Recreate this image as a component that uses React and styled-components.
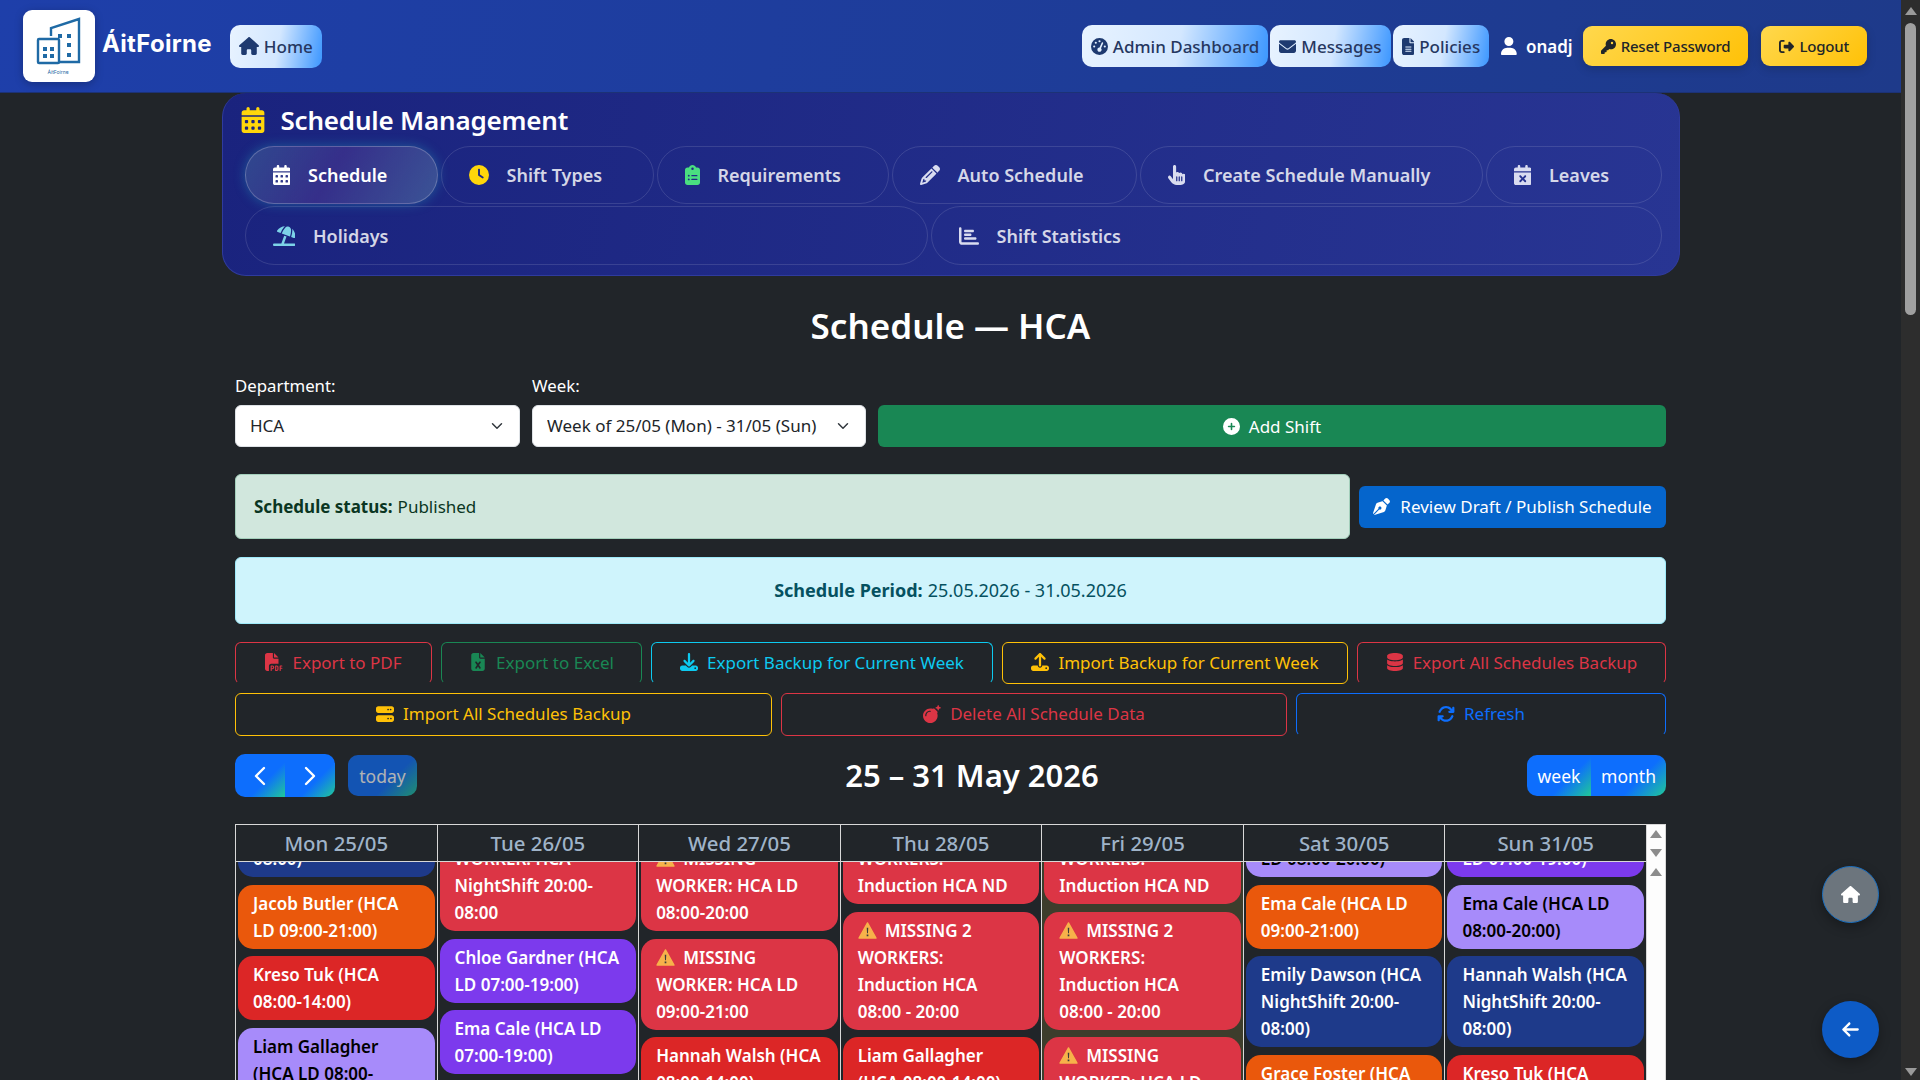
import React from "react";
import styled, { createGlobalStyle, css } from "styled-components";
import {
  FaHouse,
  FaGaugeHigh,
  FaEnvelope,
  FaFileLines,
  FaUser,
  FaKey,
  FaRightFromBracket,
  FaCalendarDays,
  FaClock,
  FaClipboardList,
  FaPencil,
  FaHandPointer,
  FaCalendarXmark,
  FaUmbrellaBeach,
  FaChartBar,
  FaFilePdf,
  FaFileExcel,
  FaDownload,
  FaUpload,
  FaDatabase,
  FaServer,
  FaBomb,
  FaArrowsRotate,
  FaPenNib,
  FaCirclePlus,
  FaArrowLeft,
} from "react-icons/fa6";
import { ChevronLeft, ChevronRight } from "lucide-react";

const GlobalStyle = createGlobalStyle`
  html, body {
    margin: 0;
    height: 100%;
    overflow: hidden;
    background: #212529;
  }
  * { box-sizing: border-box; }
  body {
    font-family: "Noto Sans", "Open Sans", sans-serif;
    color: #fff;
  }
`;

const Shell = styled.div`
  display: flex;
  height: 100vh;
  overflow: hidden;
`;

const Page = styled.div`
  flex: 1;
  min-width: 0;
  background: #212529;
`;

/* window scrollbar */
const Rail = styled.aside`
  width: 19px;
  flex: none;
  background: #2d2d2d;
  display: flex;
  flex-direction: column;
  align-items: center;
  padding: 7px 0 4px;
`;

const RailArrow = styled.span`
  width: 0;
  height: 0;
  border-left: 6px solid transparent;
  border-right: 6px solid transparent;
  ${(p) =>
    p.$down
      ? css`
          border-top: 8px solid #9a9a9a;
          margin-top: auto;
        `
      : css`
          border-bottom: 8px solid #9a9a9a;
        `}
`;

const RailThumb = styled.span`
  width: 11px;
  height: 292px;
  margin-top: 8px;
  border-radius: 6px;
  background: #a0a0a0;
`;

/* top bar */
const TopBar = styled.header`
  height: 93px;
  display: flex;
  align-items: center;
  padding: 0 34px 0 23px;
  background: linear-gradient(100deg, #1e3faa 0%, #1e3a8a 100%);
  border-bottom: 1px solid #1c3276;
`;

const LogoBox = styled.div`
  width: 72px;
  height: 72px;
  border-radius: 9px;
  background: #fff;
  box-shadow: 0 2px 8px rgba(0, 0, 0, 0.25);
  flex: none;
`;

const BrandName = styled.span`
  font-family: Inter, "Noto Sans", sans-serif;
  font-size: 24px;
  font-weight: 700;
  letter-spacing: 0.3px;
  margin: -6px 18px 0 7px;
`;

const NavLinks = styled.nav`
  margin-left: auto;
  display: flex;
  align-items: center;
  gap: 2px;
`;

const NavButton = styled.a`
  height: 42px;
  display: inline-flex;
  align-items: center;
  gap: 5px;
  padding: 0 9px;
  border-radius: 10px;
  font-size: 17px;
  font-weight: 500;
  color: #26375f;
  background: linear-gradient(100deg, #e8f3ff 0%, #d3e7ff 52%, #3b96ff 100%);
  svg {
    font-size: 17px;
    width: ${(p) => p.$iconWidth || 17}px;
    color: #1e3a70;
    flex: none;
  }
`;

const HomeButton = styled(NavButton)`
  height: 43px;
  svg {
    font-size: 18px;
  }
`;

const UserTag = styled.span`
  display: inline-flex;
  align-items: center;
  gap: 9px;
  margin: 0 8px 0 10px;
  font-size: 17px;
  font-weight: 600;
  svg {
    font-size: 18px;
    width: 15.75px;
  }
`;

const GoldButton = styled.a`
  height: 40px;
  display: inline-flex;
  align-items: center;
  gap: 5px;
  padding: 0 18px;
  margin-left: ${(p) => p.$gap || 0}px;
  border-radius: 9px;
  font-size: 15px;
  font-weight: 500;
  letter-spacing: -0.2px;
  color: #212529;
  background: linear-gradient(135deg, #ffd84d 0%, #ffc107 100%);
  box-shadow: 0 3px 10px rgba(0, 0, 0, 0.18);
  svg {
    font-size: 15px;
  }
`;

/* schedule panel */
const Panel = styled.section`
  width: 1458px;
  margin: 0 auto;
  height: 183px;
  border-radius: 24px;
  background: linear-gradient(100deg, #1a237e 0%, #283593 100%);
  border: 1px solid #2f3b9e;
  border-top: 0;
`;

const PanelTitle = styled.h1`
  margin: 0;
  height: 53px;
  padding: 1px 0 0 17px;
  display: flex;
  align-items: center;
  gap: 15px;
  font-size: 26px;
  font-weight: 600;
  letter-spacing: -0.2px;
  color: #fff;
  svg {
    color: #ffd60a;
    font-size: 26px;
  }
`;

const TabRow = styled.div`
  display: flex;
  gap: 3px;
  padding: 0 17px 0 22px;
  margin-bottom: 2px;
`;

const Tab = styled.a`
  flex: 0 0 ${(p) => p.$width}px;
  height: ${(p) => (p.$tall ? 59 : 58)}px;
  display: flex;
  align-items: center;
  gap: 18px;
  padding: 0 27px;
  border-radius: 32px;
  border: 1px solid rgba(255, 255, 255, 0.12);
  font-size: 18px;
  font-weight: 600;
  color: rgba(255, 255, 255, 0.82);
  svg {
    font-size: 20px;
    width: ${(p) => p.$iconWidth || 20}px;
    flex: none;
    color: ${(p) => p.$tint || "#d9dcf0"};
  }
  ${(p) =>
    p.$active &&
    css`
      color: #fff;
      border-color: rgba(255, 255, 255, 0.22);
      background: linear-gradient(120deg, rgba(70, 110, 160, 0.5), rgba(110, 70, 160, 0.32) 45%, rgba(90, 130, 170, 0.5));
      box-shadow: 0 0 12px rgba(40, 190, 200, 0.35);
    `}
`;

/* content */
const Content = styled.main`
  width: 1431px;
  margin: 0 auto;
`;

const Heading = styled.h2`
  margin: 28px 0 0;
  height: 44px;
  line-height: 44px;
  text-align: center;
  font-size: 35px;
  font-weight: 600;
`;

const FilterRow = styled.div`
  margin-top: 26px;
  display: flex;
  align-items: flex-end;
  gap: 12px;
`;

const Field = styled.label`
  width: ${(p) => p.$width}px;
  flex: none;
  display: flex;
  flex-direction: column;
  gap: 7px;
  font-size: 16.8px;
  line-height: 24px;
`;

const Select = styled.select`
  appearance: none;
  height: 42px;
  padding: 0 14px;
  border: 1px solid #dee2e6;
  border-radius: 6px;
  font: inherit;
  font-size: 17px;
  color: #212529;
  background: #fff url("data:image/svg+xml,%3csvg xmlns='http://www.w3.org/2000/svg' viewBox='0 0 16 16'%3e%3cpath fill='none' stroke='%23343a40' stroke-linecap='round' stroke-linejoin='round' stroke-width='2' d='m2 5 6 6 6-6'/%3e%3c/svg%3e") no-repeat right 14px center / 16px 12px;
`;

const AddButton = styled.button`
  flex: 1;
  height: 42px;
  display: flex;
  align-items: center;
  justify-content: center;
  gap: 9px;
  border: 0;
  border-radius: 6px;
  font: inherit;
  font-size: 17px;
  color: #fff;
  background: #198754;
`;

const StatusRow = styled.div`
  margin-top: 27px;
  display: flex;
  align-items: center;
  gap: 9px;
`;

const Alert = styled.div`
  flex: 1;
  display: flex;
  align-items: center;
  justify-content: ${(p) => (p.$center ? "center" : "flex-start")};
  gap: 5px;
  height: ${(p) => p.$height}px;
  padding: 0 18px 1px;
  border-radius: 6px;
  font-size: ${(p) => p.$size || 17}px;
  background: ${(p) => p.$bg};
  color: ${(p) => p.$fg};
  border: 1px solid ${(p) => p.$line};
  margin-top: ${(p) => p.$top || 0}px;
  b {
    font-weight: 700;
  }
`;

const PublishButton = styled.button`
  width: 307px;
  flex: none;
  height: 42px;
  display: flex;
  align-items: center;
  justify-content: center;
  gap: 10px;
  border: 0;
  border-radius: 6px;
  font: inherit;
  font-size: 17px;
  color: #fff;
  background: #0565cc;
`;

const ActionRow = styled.div`
  display: flex;
  gap: 9px;
  margin-top: ${(p) => p.$top}px;
`;

const OutlineButton = styled.button`
  flex: 0 0 ${(p) => p.$width}px;
  height: ${(p) => p.$height || 42}px;
  display: flex;
  align-items: center;
  justify-content: center;
  gap: 9px;
  padding: 0 0 2px;
  background: transparent;
  border: 1px solid ${(p) => p.$color};
  ${(p) => p.$open && "border-bottom-color: transparent;"}
  border-radius: 6px;
  font: inherit;
  font-size: 17px;
  color: ${(p) => p.$color};
  svg {
    font-size: 18px;
    flex: none;
  }
`;

const CalToolbar = styled.div`
  margin-top: 18px;
  height: 43px;
  display: flex;
  align-items: center;
`;

const gradientBtn = css`
  background: linear-gradient(135deg, #0d6efd 0%, #0d6efd 62%, #20c997 100%);
  color: #fff;
  border: 0;
  font: inherit;
  font-size: 17.5px;
`;

const NavGroup = styled.div`
  display: flex;
  height: 43px;
  border-radius: 10px;
  overflow: hidden;
`;

const PagerButton = styled.button`
  ${gradientBtn}
  width: 50px;
  padding: 0;
  display: flex;
  align-items: center;
  justify-content: center;
`;

const TodayButton = styled.button`
  ${gradientBtn}
  width: 69px;
  height: 41px;
  margin-left: 13px;
  border-radius: 10px;
  opacity: 0.65;
`;

const RangeTitle = styled.h3`
  flex: 1;
  margin: -2px 0 0;
  text-align: center;
  font-size: 31px;
  font-weight: 600;
`;

const ViewGroup = styled.div`
  display: flex;
  height: 41px;
  border-radius: 10px;
  overflow: hidden;
`;

const ViewButton = styled.button`
  ${gradientBtn}
  width: ${(p) => p.$width}px;
  padding: 0;
`;

/* calendar */
const Calendar = styled.div`
  margin-top: 27px;
  display: flex;
  height: 420px;
  border-top: 1px solid #d8d8d8;
`;

const CalMain = styled.div`
  flex: 1;
  min-width: 0;
  display: flex;
  flex-direction: column;
`;

const DayHead = styled.div`
  height: 37px;
  flex: none;
  display: grid;
  grid-template-columns: repeat(7, 1fr);
  border-bottom: 1px solid #d8d8d8;
  background: #212529;
  position: relative;
  z-index: 1;
`;

const DayName = styled.div`
  display: flex;
  align-items: center;
  justify-content: center;
  border-left: 1px solid #d8d8d8;
  font-size: 20.4px;
  font-weight: 500;
  color: #9fb3c8;
`;

const DayBody = styled.div`
  flex: 1;
  min-height: 0;
  display: grid;
  grid-template-columns: repeat(7, 1fr);
  overflow: hidden;
`;

const DayColumn = styled.div`
  border-left: 1px solid #d8d8d8;
  padding: 0 2px;
  overflow: hidden;
  background: ${(p) => (p.$today ? "#3d3d2c" : "transparent")};
`;

const DayStack = styled.div`
  display: flex;
  flex-direction: column;
  gap: 7.5px;
  margin-top: -${(p) => p.$lift}px;
`;

const Event = styled.div`
  flex: none;
  padding: 5px 14px 5px 15px;
  border-radius: 15px;
  font-size: 17px;
  font-weight: 600;
  line-height: 27px;
  white-space: nowrap;
  overflow: hidden;
  background: ${(p) => p.$bg};
  color: ${(p) => p.$fg || "#fff"};
`;

const EventLine = styled.span`
  display: flex;
  align-items: center;
  gap: 8px;
  height: 27px;
`;

const CalGutter = styled.div`
  width: 20px;
  flex: none;
  background: #fdfdfd;
  border-left: 1px solid #d8d8d8;
  border-right: 1px solid #d8d8d8;
  display: flex;
  flex-direction: column;
  align-items: center;
  padding-top: 5px;
  gap: 11px;
`;

const GutterArrow = styled.span`
  width: 0;
  height: 0;
  border-left: 6px solid transparent;
  border-right: 6px solid transparent;
  ${(p) =>
    p.$down
      ? "border-top: 8px solid #8c8c8c;"
      : "border-bottom: 8px solid #8c8c8c;"}
`;

const Fab = styled.button`
  position: fixed;
  right: 41px;
  bottom: ${(p) => p.$bottom}px;
  width: 57px;
  height: 57px;
  padding: 0;
  border-radius: 50%;
  border: ${(p) => (p.$muted ? "1px solid #1a6fc0" : "0")};
  background: ${(p) => (p.$muted ? "#6c757d" : "#0d5bc6")};
  color: #fff;
  display: flex;
  align-items: center;
  justify-content: center;
  box-shadow: 0 4px 12px rgba(0, 0, 0, 0.3);
  font-size: 19px;
`;

const Logo = () => (
  <svg viewBox="0 0 72 72" width="72" height="72">
    <g fill="none" stroke="#1f6aa5" strokeWidth="2.4">
      <path d="M28 26v-8l28-9v43H36" />
      <rect x="15" y="29" width="21" height="24" rx="1" />
    </g>
    <g fill="#1f6aa5">
      <rect x="35" y="24" width="4" height="4" />
      <rect x="44" y="24" width="4" height="4" />
      <rect x="44" y="33" width="4" height="4" />
      <rect x="44" y="43" width="4" height="4" />
      <rect x="20" y="37" width="4" height="4" />
      <rect x="27" y="37" width="4" height="4" />
      <rect x="20" y="44" width="4" height="4" />
      <rect x="27" y="44" width="4" height="4" />
    </g>
    <text x="35" y="64" textAnchor="middle" fontSize="5" fill="#1f6aa5" fontFamily="Inter, sans-serif">
      ÁitFoirne
    </text>
  </svg>
);

const Warn = () => (
  <svg viewBox="0 0 20 18" width="19" height="17" style={{ flex: "none" }}>
    <path d="M10 1 19 17H1Z" fill="#f7b24a" stroke="#f7b24a" strokeWidth="1.4" strokeLinejoin="round" />
    <path d="M9.2 6h1.6l-.3 6h-1zM9.1 13.2h1.8V15H9.1z" fill="#3c3c3c" />
  </svg>
);

const NAVY = "#1e3a8a";
const ORANGE = "#ea580c";
const RED = "#dc2626";
const PURPLE = "#7c3aed";
const LAVENDER = "#a78bfa";
const ALERT = "#dc3545";

const shift = (bg, lines, fg) => ({ bg, lines, fg });
const missing = (lines) => ({ bg: ALERT, lines, warn: true });

const days = [
  {
    name: "Mon 25/05",
    lift: 76,
    events: [
      shift(NAVY, ["Isla Byrne (HCA", "NightShift 20:00-", "08:00)"]),
      shift(ORANGE, ["Jacob Butler (HCA", "LD 09:00-21:00)"]),
      shift(RED, ["Kreso Tuk (HCA", "08:00-14:00)"]),
      shift(LAVENDER, ["Liam Gallagher", "(HCA LD 08:00-", "20:00)"], "#000"),
    ],
  },
  {
    name: "Tue 26/05",
    lift: 49,
    events: [
      missing(["MISSING", "WORKER: HCA", "NightShift 20:00-", "08:00"]),
      shift(PURPLE, ["Chloe Gardner (HCA", "LD 07:00-19:00)"]),
      shift(PURPLE, ["Ema Cale (HCA LD", "07:00-19:00)"]),
    ],
  },
  {
    name: "Wed 27/05",
    lift: 22,
    events: [
      missing(["MISSING", "WORKER: HCA LD", "08:00-20:00"]),
      missing(["MISSING", "WORKER: HCA LD", "09:00-21:00"]),
      shift(RED, ["Hannah Walsh (HCA", "08:00-14:00)"]),
    ],
  },
  {
    name: "Thu 28/05",
    lift: 49,
    events: [
      missing(["MISSING 2", "WORKERS:", "Induction HCA ND"]),
      missing(["MISSING 2", "WORKERS:", "Induction HCA", "08:00 - 20:00"]),
      shift(RED, ["Liam Gallagher", "(HCA 08:00-14:00)"]),
    ],
  },
  {
    name: "Fri 29/05",
    lift: 49,
    today: true,
    events: [
      missing(["MISSING 2", "WORKERS:", "Induction HCA ND"]),
      missing(["MISSING 2", "WORKERS:", "Induction HCA", "08:00 - 20:00"]),
      missing(["MISSING", "WORKER: HCA LD", "08:00-20:00"]),
    ],
  },
  {
    name: "Sat 30/05",
    lift: 49,
    events: [
      shift(LAVENDER, ["Chloe Gardner (HCA", "LD 08:00-20:00)"], "#000"),
      shift(ORANGE, ["Ema Cale (HCA LD", "09:00-21:00)"]),
      shift(NAVY, ["Emily Dawson (HCA", "NightShift 20:00-", "08:00)"]),
      shift(ORANGE, ["Grace Foster (HCA", "LD 09:00-21:00)"]),
    ],
  },
  {
    name: "Sun 31/05",
    lift: 49,
    events: [
      shift(PURPLE, ["Chloe Gardner (HCA", "LD 07:00-19:00)"]),
      shift(LAVENDER, ["Ema Cale (HCA LD", "08:00-20:00)"], "#000"),
      shift(NAVY, ["Hannah Walsh (HCA", "NightShift 20:00-", "08:00)"]),
      shift(RED, ["Kreso Tuk (HCA", "08:00-14:00)"]),
    ],
  },
];

export default function App() {
  return (
    <Shell>
      <GlobalStyle />
      <Page>
        <TopBar>
          <LogoBox>
            <Logo />
          </LogoBox>
          <BrandName>ÁitFoirne</BrandName>
          <HomeButton $iconWidth={20}>
            <FaHouse />
            Home
          </HomeButton>
          <NavLinks>
            <NavButton>
              <FaGaugeHigh />
              Admin Dashboard
            </NavButton>
            <NavButton>
              <FaEnvelope />
              Messages
            </NavButton>
            <NavButton $iconWidth={12.75}>
              <FaFileLines />
              Policies
            </NavButton>
            <UserTag>
              <FaUser />
              onadj
            </UserTag>
            <GoldButton>
              <FaKey />
              Reset Password
            </GoldButton>
            <GoldButton $gap={11}>
              <FaRightFromBracket />
              Logout
            </GoldButton>
          </NavLinks>
        </TopBar>

        <Panel>
          <PanelTitle>
            <FaCalendarDays />
            Schedule Management
          </PanelTitle>
          <TabRow>
            <Tab $active $width={193} $iconWidth={17.5} $tint="#fff">
              <FaCalendarDays />
              Schedule
            </Tab>
            <Tab $width={213} $tint="#ffd60a">
              <FaClock />
              Shift Types
            </Tab>
            <Tab $width={232} $iconWidth={15} $tint="#4ade80">
              <FaClipboardList />
              Requirements
            </Tab>
            <Tab $width={245}>
              <FaPencil />
              Auto Schedule
            </Tab>
            <Tab $width={343} $iconWidth={17.5}>
              <FaHandPointer />
              Create Schedule Manually
            </Tab>
            <Tab $width={176} $iconWidth={17.5}>
              <FaCalendarXmark />
              Leaves
            </Tab>
          </TabRow>
          <TabRow>
            <Tab $tall $width={683} $iconWidth={22.5} $tint="#7dd3e8">
              <FaUmbrellaBeach />
              Holidays
            </Tab>
            <Tab $tall $width={731}>
              <FaChartBar />
              Shift Statistics
            </Tab>
          </TabRow>
        </Panel>

        <Content>
          <Heading>Schedule — HCA</Heading>

          <FilterRow>
            <Field $width={285}>
              Department:
              <Select defaultValue="HCA">
                <option>HCA</option>
              </Select>
            </Field>
            <Field $width={334}>
              Week:
              <Select defaultValue="w">
                <option value="w">Week of 25/05 (Mon) - 31/05 (Sun)</option>
              </Select>
            </Field>
            <AddButton>
              <FaCirclePlus />
              Add Shift
            </AddButton>
          </FilterRow>

          <StatusRow>
            <Alert $height={65} $bg="#d1e7dd" $fg="#0a3622" $line="#a3cfbb">
              <b>Schedule status:</b> Published
            </Alert>
            <PublishButton>
              <FaPenNib />
              Review Draft / Publish Schedule
            </PublishButton>
          </StatusRow>

          <Alert $center $top={18} $height={67} $size={18} $bg="#cff4fc" $fg="#055160" $line="#9eeaf9">
            <b>Schedule Period:</b> 25.05.2026 - 31.05.2026
          </Alert>

          <ActionRow $top={18}>
            <OutlineButton $open $width={197} $color="#dc3545">
              <FaFilePdf />
              Export to PDF
            </OutlineButton>
            <OutlineButton $open $width={201} $color="#198754">
              <FaFileExcel />
              Export to Excel
            </OutlineButton>
            <OutlineButton $open $width={342} $color="#0dcaf0">
              <FaDownload />
              Export Backup for Current Week
            </OutlineButton>
            <OutlineButton $width={346} $color="#ffc107">
              <FaUpload />
              Import Backup for Current Week
            </OutlineButton>
            <OutlineButton $open $width={309} $color="#dc3545">
              <FaDatabase />
              Export All Schedules Backup
            </OutlineButton>
          </ActionRow>

          <ActionRow $top={9}>
            <OutlineButton $height={43} $width={537} $color="#ffc107">
              <FaServer />
              Import All Schedules Backup
            </OutlineButton>
            <OutlineButton $height={43} $width={506} $color="#dc3545">
              <FaBomb />
              Delete All Schedule Data
            </OutlineButton>
            <OutlineButton $height={43} $width={370} $open $color="#0d6efd">
              <FaArrowsRotate />
              Refresh
            </OutlineButton>
          </ActionRow>

          <CalToolbar>
            <NavGroup>
              <PagerButton>
                <ChevronLeft size={32} strokeWidth={1.8} />
              </PagerButton>
              <PagerButton>
                <ChevronRight size={32} strokeWidth={1.8} />
              </PagerButton>
            </NavGroup>
            <TodayButton>today</TodayButton>
            <RangeTitle>25 – 31 May 2026</RangeTitle>
            <ViewGroup>
              <ViewButton $width={64}>week</ViewButton>
              <ViewButton $width={75}>month</ViewButton>
            </ViewGroup>
          </CalToolbar>

          <Calendar>
            <CalMain>
              <DayHead>
                {days.map((day) => (
                  <DayName key={day.name}>{day.name}</DayName>
                ))}
              </DayHead>
              <DayBody>
                {days.map((day) => (
                  <DayColumn key={day.name} $today={day.today}>
                    <DayStack $lift={day.lift}>
                      {day.events.map((ev, i) => (
                        <Event key={i} $bg={ev.bg} $fg={ev.fg}>
                          {ev.lines.map((line, j) => (
                            <EventLine key={j}>
                              {ev.warn && j === 0 && <Warn />}
                              {line}
                            </EventLine>
                          ))}
                        </Event>
                      ))}
                    </DayStack>
                  </DayColumn>
                ))}
              </DayBody>
            </CalMain>
            <CalGutter>
              <GutterArrow />
              <GutterArrow $down />
              <GutterArrow />
            </CalGutter>
          </Calendar>
        </Content>

        <Fab $muted $bottom={157}>
          <FaHouse />
        </Fab>
        <Fab $bottom={22}>
          <FaArrowLeft />
        </Fab>
      </Page>
      <Rail>
        <RailArrow />
        <RailThumb />
        <RailArrow $down />
      </Rail>
    </Shell>
  );
}
